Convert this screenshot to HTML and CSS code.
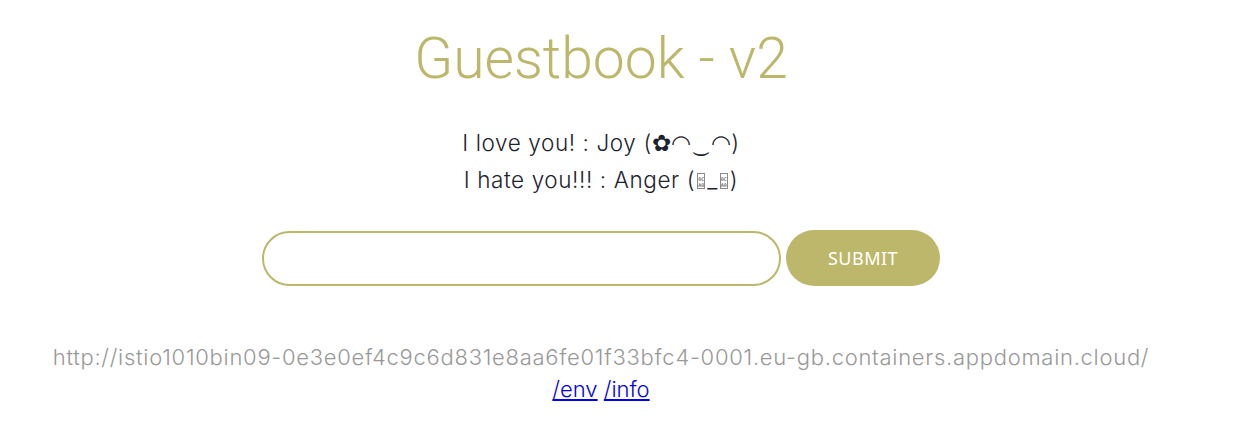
FILE: index.html
```html
<!DOCTYPE html>
<html>
<head>
<meta charset="utf-8">
<link rel="stylesheet" href="styles.css">
<title>Guestbook</title>
</head>
<body>
<div class="page">
  <h1 class="title">Guestbook - v2</h1>
  <div class="entries">
    <div class="entry">I love you! : Joy (✿◠‿◠)</div>
    <div class="entry">I hate you!!! : Anger (<span class="tofu">0C<br>A0</span>_<span class="tofu">0C<br>A0</span>)</div>
  </div>
  <form class="form">
    <input class="field" type="text">
    <button class="submit" type="button">SUBMIT</button>
  </form>
  <div class="host">http://istio1010bin09-0e3e0ef4c9c6d831e8aa6fe01f33bfc4-0001.eu-gb.containers.appdomain.cloud/</div>
  <div class="links"><a href="#">/env</a> <a href="#">/info</a></div>
</div>
</body>
</html>
```
FILE: styles.css
```css
html, body {
  margin: 0;
  background: #fff;
}
.page {
  width: 1202px;
  display: flex;
  flex-direction: column;
  align-items: center;
  font-family: Inter, Roboto, "Noto Sans", sans-serif;
  font-weight: 300;
}
.title {
  margin: 22px 0 0;
  font-family: Roboto, sans-serif;
  font-size: 57px;
  font-weight: 300;
  line-height: 74px;
  color: #bdb76b;
}
.entries {
  margin-top: 28px;
  display: flex;
  flex-direction: column;
  align-items: center;
  color: #1c2330;
  font-size: 22.5px;
  line-height: 37px;
  letter-spacing: 0.6px;
}
.tofu {
  display: inline-block;
  width: 8px;
  height: 16px;
  border: 1px solid #8a8a8a;
  font-family: "DejaVu Sans Mono", monospace;
  font-size: 5px;
  line-height: 6px;
  font-weight: 400;
  letter-spacing: 0;
  vertical-align: -1px;
  text-align: center;
  padding-top: 2px;
  box-sizing: border-box;
  margin: 0 2px;
  overflow: hidden;
  color: #333;
}
.form {
  margin-top: 32px;
  display: flex;
  align-items: center;
  gap: 5px;
}
.field {
  width: 519px;
  height: 55px;
  box-sizing: border-box;
  border: 2px solid #bdb76b;
  border-radius: 28px;
  background: #fff;
  outline: none;
}
.submit {
  width: 154px;
  height: 56px;
  border: none;
  border-radius: 28px;
  background: #bdb76b;
  color: #fff;
  font-family: "Noto Sans", Roboto, sans-serif;
  font-size: 18px;
  font-weight: 400;
  letter-spacing: 0.5px;
}
.host {
  margin-top: 55px;
  color: #999;
  font-size: 22px;
  line-height: 32px;
  letter-spacing: 0.72px;
}
.links {
  font-size: 22px;
  line-height: 32px;
}
.links a {
  color: #0000ee;
}
```
